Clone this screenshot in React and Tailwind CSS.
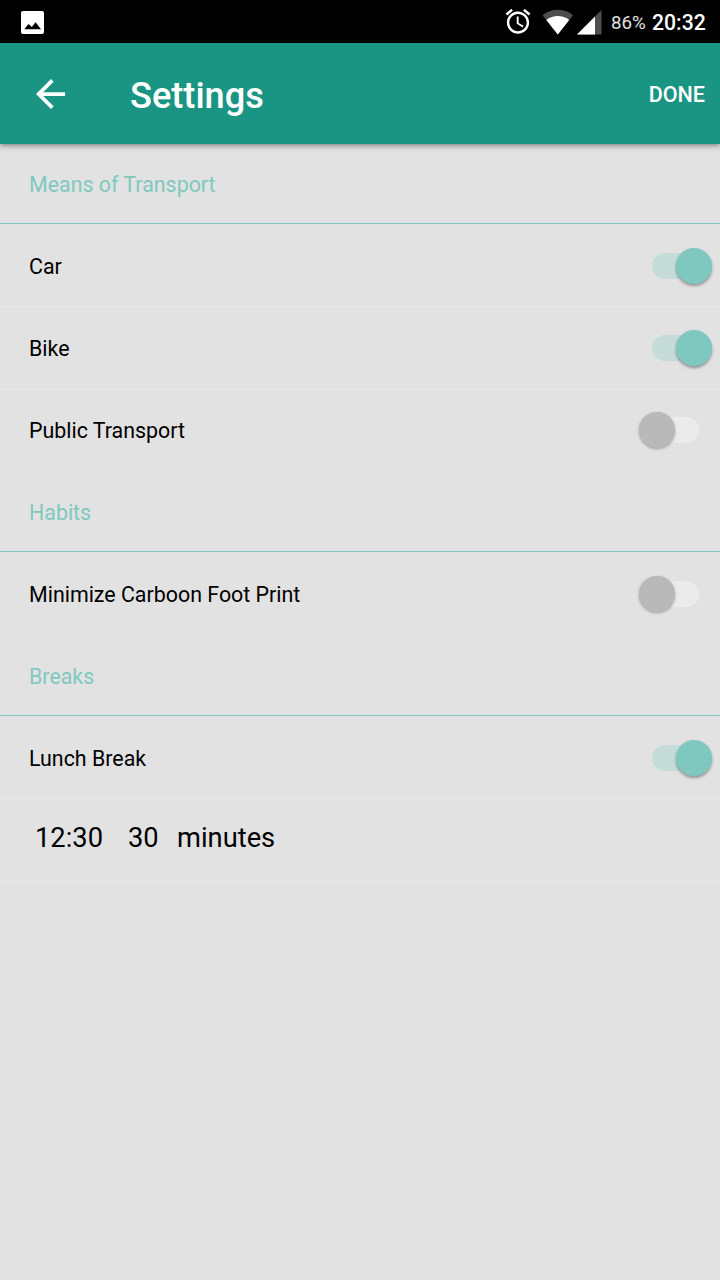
function ImageIcon() {
  return (
    <svg className="mt-[1px] ml-[21px] h-[23px] w-[23px]" viewBox="0 0 23 23" fill="#fff">
      <path fillRule="evenodd" d="M2 0H21Q23 0 23 2V21Q23 23 21 23H2Q0 23 0 21V2Q0 0 2 0ZM3.300 18.300H20L14.600 11.300L10.800 16L7.400 13Z" />
    </svg>
  );
}

function AlarmIcon() {
  return (
    <svg className="h-[26px] w-[26px]" viewBox="1.500 2 21 21" fill="#fff">
      <path d="M22 5.720l-4.600-3.860-1.290 1.530 4.600 3.860L22 5.720zM7.880 3.390L6.600 1.860 2 5.710l1.290 1.530 4.590-3.850zM12.500 8H11v6l4.750 2.850.75-1.230-4-2.370V8zM12 4c-4.970 0-9 4.030-9 9s4.020 9 9 9c4.970 0 9-4.030 9-9s-4.030-9-9-9zm0 16c-3.870 0-7-3.130-7-7s3.130-7 7-7 7 3.130 7 7-3.130 7-7 7z" />
    </svg>
  );
}

function WifiIcon() {
  return (
    <svg className="ml-[11px] h-[26px] w-[32px]" viewBox="0 0 32 26">
      <path d="M.5 6.200C9 -1.200 22.500 -1.200 31 6.200L15.800 25.500z" fill="#4d4d4d" />
      <path d="M4.300 11C11 5.800 20.500 5.800 27.200 11L15.800 25.500z" fill="#fff" />
    </svg>
  );
}

function SignalIcon() {
  return (
    <svg className="ml-[3px] h-[26px] w-[26px]" viewBox="0 0 26 26">
      <path d="M24.500 1v24.500H0z" fill="#4d4d4d" />
      <path d="M18 7.500v18H0z" fill="#fff" />
    </svg>
  );
}

function StatusBar() {
  return (
    <div className="flex h-[43px] items-center bg-black text-white">
      <ImageIcon />
      <div className="ml-auto flex items-center pr-[14px]">
        <AlarmIcon />
        <WifiIcon />
        <SignalIcon />
        <span className="ml-[8px] w-[41px] pt-[2px] whitespace-nowrap text-[18.700px] leading-[26px] text-[#e0e0e0]">86%</span>
        <span className="w-[54px] pt-[2px] whitespace-nowrap text-[21.200px] leading-[26px] font-medium">20:32</span>
      </div>
    </div>
  );
}

function AppBar() {
  return (
    <header className="relative flex h-[101px] items-center bg-[#1a9583] pr-[15px] text-white shadow-[0_2px_5px_rgba(0,0,0,0.4)]">
      <svg className="ml-[36px] h-[30px] w-[30px]" viewBox="4 4 16 16" fill="#fff">
        <path d="M19.500 11H7.830l5.590-5.590L12 4l-8 8 8 8 1.410-1.410L7.830 13H19.500v-2z" />
      </svg>
      <h1 className="ml-[64px] pt-[4px] text-[36.200px] leading-[44px] font-medium">Settings</h1>
      <button className="ml-auto pt-[2px] text-[21.500px] leading-[28px] font-medium">DONE</button>
    </header>
  );
}

function SectionTitle({ children }) {
  return (
    <h2 className="flex h-[80px] items-center border-b border-[#80cbc1] px-[29px] pt-[4px] text-[21.400px] text-[#80c9bf]">
      {children}
    </h2>
  );
}

function Toggle({ on }) {
  return on ? (
    <span role="switch" aria-checked="true" className="flex h-[26px] w-[60px] items-center justify-end rounded-full bg-[#c5dcd9]">
      <span className="h-[36px] w-[36px] shrink-0 rounded-full bg-[#7fc8c0] shadow-[0_2px_3px_rgba(0,0,0,0.35)]" />
    </span>
  ) : (
    <span role="switch" aria-checked="false" className="mr-[13px] flex h-[26px] w-[60px] items-center rounded-full bg-[#ebebeb]">
      <span className="h-[36px] w-[36px] shrink-0 rounded-full bg-[#b9b9b9] shadow-[0_1px_3px_rgba(0,0,0,0.3)]" />
    </span>
  );
}

function SettingRow({ label, on, first, last }) {
  return (
    <div className={`flex items-center justify-between border-b-2 pr-[8px] pl-[29px] ${first ? "h-[84px] pt-[2px]" : "h-[82px]"} ${last ? "border-transparent" : "border-[#e6e6e6]"}`}>
      <span className="pt-[3px] text-[21.400px] text-black">{label}</span>
      <Toggle on={on} />
    </div>
  );
}

export default function App() {
  return (
    <div className="flex h-[1280px] w-[720px] flex-col overflow-hidden bg-[#e2e2e2] font-['Roboto',sans-serif]">
      <StatusBar />
      <AppBar />
      <main>
        <SectionTitle>Means of Transport</SectionTitle>
        <SettingRow label="Car" on first />
        <SettingRow label="Bike" on />
        <SettingRow label="Public Transport" last />
        <SectionTitle>Habits</SectionTitle>
        <SettingRow label="Minimize Carboon Foot Print" first last />
        <SectionTitle>Breaks</SectionTitle>
        <SettingRow label="Lunch Break" on first />
        <div className="flex h-[82px] items-center border-b-2 border-[#e6e6e6] pb-[4px] pl-[35px] text-[27.300px] text-black">
          <span className="w-[93px]">12:30</span>
          <span className="w-[49px]">30</span>
          <span>minutes</span>
        </div>
      </main>
    </div>
  );
}
